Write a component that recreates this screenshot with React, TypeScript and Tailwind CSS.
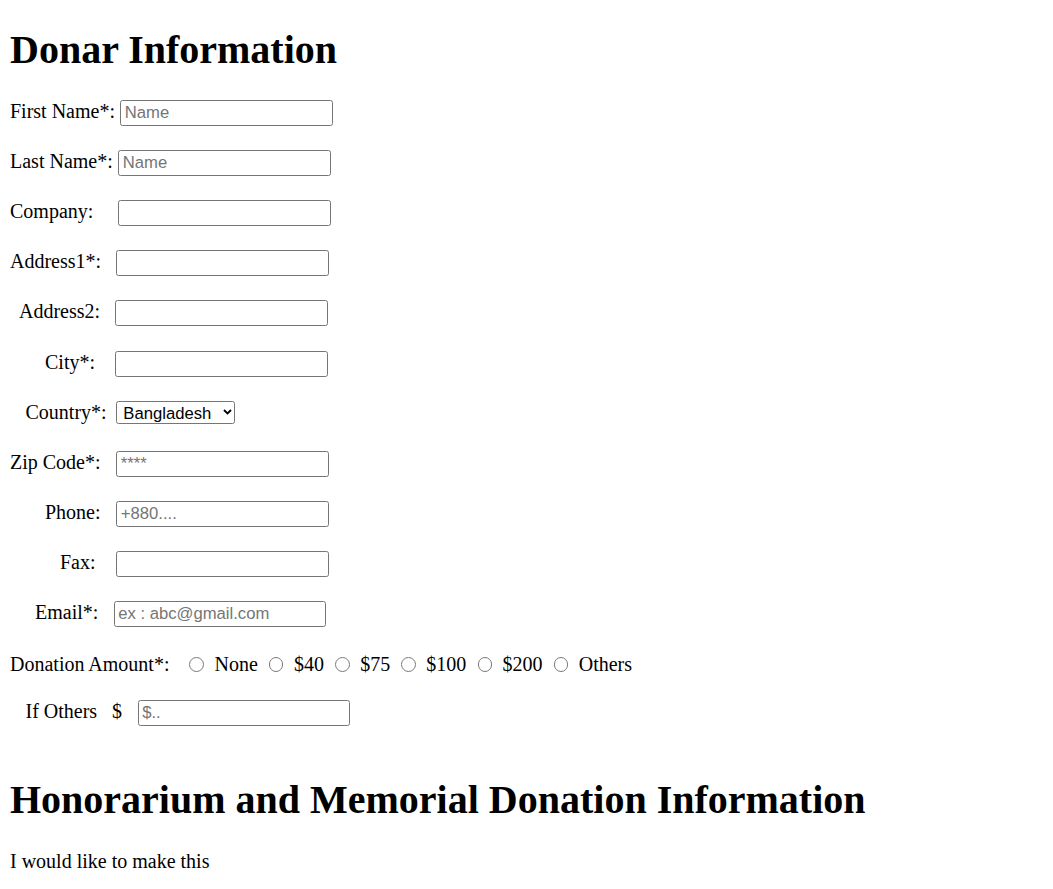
import React from "react";

const inputCls =
  "h-[26px] w-[212.5px] border border-[#767676] rounded-[2.5px] pl-[3.5px] pr-[2.5px] bg-white text-black font-['Liberation_Sans',Arial,sans-serif] text-[16.67px] placeholder:text-[#757575] outline-none";

type RowProps = { label: string; labelPad: number; inputX: number; placeholder?: string };

function Row({ label, labelPad, inputX, placeholder }: RowProps) {
  return (
    <div className="flex items-baseline h-[27.2px] mb-[23px]">
      <span className="shrink-0" style={{ width: inputX - 10, paddingLeft: labelPad }}>
        {label}
      </span>
      <input type="text" className={inputCls} placeholder={placeholder} />
    </div>
  );
}

function Radio({ label, ml }: { label: string; ml: number }) {
  return (
    <span className="inline-flex items-center" style={{ marginLeft: ml }}>
      <span className="inline-block w-[14.5px] h-[14.5px] rounded-full border border-[#7a7a7a] bg-white" />
      <span className="ml-[10.5px]">{label}</span>
    </span>
  );
}

export default function App() {
  return (
    <div className="min-h-screen bg-white px-[10px] pb-[10px] pt-px text-black font-['Liberation_Serif','Times_New_Roman',serif] text-[20px] leading-[23px]">
      <h1 className="mt-[25.8px] mb-[26.8px] text-[40px] leading-[46px] font-bold">Donar Information</h1>

      <Row label="First Name*:" labelPad={0} inputX={120.3} placeholder="Name" />
      <Row label="Last Name*:" labelPad={0} inputX={118.3} placeholder="Name" />
      <Row label="Company:" labelPad={0} inputX={118.3} />
      <Row label="Address1*:" labelPad={0} inputX={116.3} />
      <Row label="Address2:" labelPad={9} inputX={115.3} />
      <Row label="City*:" labelPad={35} inputX={115.3} />

      <div className="flex items-baseline h-[27.2px] mb-[23px]">
        <span className="shrink-0" style={{ width: 106.3, paddingLeft: 15.5 }}>
          Country*:
        </span>
        <div className="relative">
          <select className="appearance-none h-[23px] w-[119px] border border-[#767676] rounded-[2.5px] pl-[6px] pr-[16px] bg-white text-black font-['Liberation_Sans',Arial,sans-serif] text-[16.67px] outline-none">
            <option>Bangladesh</option>
          </select>
          <svg
            className="absolute right-[3px] top-1/2 -translate-y-1/2 pointer-events-none"
            width="9"
            height="6"
            viewBox="0 0 9 6"
            fill="none"
          >
            <path d="M1 1L4.5 4.5L8 1" stroke="#000" strokeWidth="1.8" />
          </svg>
        </div>
      </div>

      <Row label="Zip Code*:" labelPad={0} inputX={116.3} placeholder="****" />
      <Row label="Phone:" labelPad={35} inputX={116.3} placeholder="+880...." />
      <Row label="Fax:" labelPad={50} inputX={116.3} />
      <Row label="Email*:" labelPad={25} inputX={113.7} placeholder="ex : abc@gmail.com" />

      <div className="flex items-center h-[26px] mb-[22.5px]">
        <span className="shrink-0">Donation Amount*:</span>
        <Radio label="None" ml={20} />
        <Radio label="$40" ml={11.2} />
        <Radio label="$75" ml={11.2} />
        <Radio label="$100" ml={11.2} />
        <Radio label="$200" ml={11.2} />
        <Radio label="Others" ml={11.2} />
      </div>

      <div className="flex items-baseline h-[27.2px]">
        <span className="shrink-0 w-[102px] pl-[15.5px]">If Others</span>
        <span className="shrink-0 w-[25.7px]">$</span>
        <input type="text" className={inputCls} placeholder="$.." />
      </div>
      <div className="h-[23px]" />

      <h1 className="mt-[26.8px] mb-[27.3px] text-[40px] leading-[46px] font-bold">
        Honorarium and Memorial Donation Information
      </h1>
      <p>I would like to make this</p>
    </div>
  );
}
